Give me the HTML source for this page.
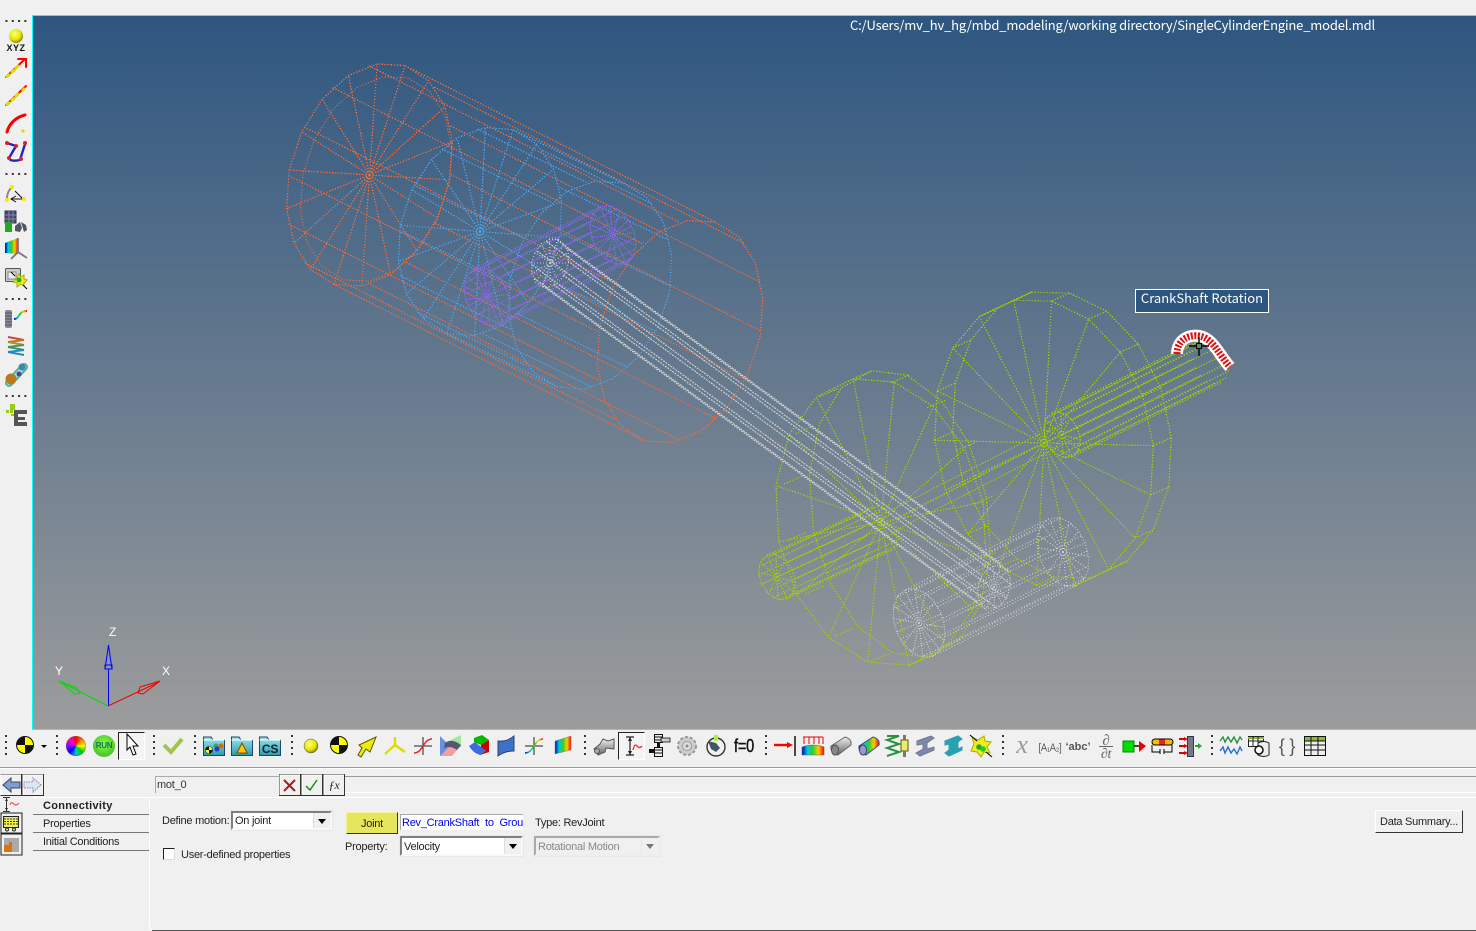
<!DOCTYPE html>
<html><head><meta charset="utf-8"><title>MotionView</title>
<style>
html,body{margin:0;padding:0;width:1476px;height:931px;overflow:hidden;background:#f0f0f0}
body{position:relative;font:11px "Liberation Sans",sans-serif;color:#222;letter-spacing:-.25px}
.a{position:absolute}
#vp{left:32px;top:15px;width:1443px;height:713px;border-left:1px solid #0ff;border-top:1px solid #0ff;border-bottom:1px solid #0ff;background:linear-gradient(#2e5680,#9c9c9c)}
svg{position:absolute;left:0;top:0}
.t{position:absolute;white-space:nowrap;line-height:14px}
.sel{position:absolute;box-sizing:border-box;background:#fff;border:2px solid;border-color:#808080 #f8f8f8 #f8f8f8 #808080;outline:1px solid #e8e8e8;padding:2px 2px;line-height:14px}
.sel i{position:absolute;right:0;top:0;bottom:0;width:16px;background:#f0f0f0;border-left:1px solid #ddd}
.sel i:after{content:"";position:absolute;left:4px;top:6px;border:4px solid transparent;border-top:5px solid #000;border-bottom:0}
.btn{position:absolute;box-sizing:border-box;background:#f0f0f0;border:1px solid;border-color:#fff #333 #333 #fff;text-align:center}
.tab{position:absolute;left:33px;width:116px;height:18px;box-sizing:border-box;border-bottom:1px solid #777;padding-left:10px;line-height:19px}
</style></head><body>
<div class="a" id="vp"></div>
<svg id="wf" width="1476" height="931" viewBox="0 0 1476 931"></svg>

<div class="t" style="left:850px;top:17px;color:#fff;font:13px 'Noto Sans CJK JP','Liberation Sans',sans-serif;line-height:16px;letter-spacing:-.175px">C:/Users/mv_hv_hg/mbd_modeling/working directory/SingleCylinderEngine_model.mdl</div>
<div class="a" style="left:1135px;top:289px;width:132px;height:22px;border:1px solid #fff;background:#2c5680;color:#fff;font:13px 'Noto Sans CJK JP','Liberation Sans',sans-serif;line-height:15px;text-align:center;letter-spacing:0">CrankShaft Rotation</div>
<div class="t" style="left:109px;top:625px;color:#fff;font-size:12px">Z</div>
<div class="t" style="left:55px;top:664px;color:#fff;font-size:12px">Y</div>
<div class="t" style="left:162px;top:664px;color:#fff;font-size:12px">X</div>

<!-- toolbars -->
<div class="a" style="left:0;top:767px;width:1476px;height:1px;background:#999"></div>
<div class="a" style="left:0;top:768px;width:1476px;height:1px;background:#fff"></div>
<div class="a" style="left:118px;top:732px;width:25px;height:26px;background:#f4f4f4;border:1px solid;border-color:#222 #fff #fff #222"></div>
<div class="a" style="left:618px;top:732px;width:25px;height:26px;background:#f4f4f4;border:1px solid;border-color:#222 #fff #fff #222"></div>
<div class="a" style="left:66px;top:736px;width:20px;height:20px;border-radius:50%;background:conic-gradient(#f00,#f80,#ff0,#0c0,#0cc,#00f,#80f,#f0c,#f00);box-shadow:inset 0 0 2px #555"></div>
<div class="a" style="left:93px;top:735px;width:22px;height:22px;border-radius:50%;background:radial-gradient(circle at 50% 40%,#8f4,#3a2);text-align:center;font:bold 8px/22px 'Liberation Sans',sans-serif;color:#175">RUN</div>
<svg width="1476" height="931" viewBox="0 0 1476 931">
<defs>
<radialGradient id="ys" cx=".4" cy=".35" r=".7"><stop offset="0" stop-color="#ffff80"/><stop offset=".6" stop-color="#e6e600"/><stop offset="1" stop-color="#777700"/></radialGradient>
<linearGradient id="rb" x1="0" x2="1"><stop offset="0" stop-color="#00c"/><stop offset=".25" stop-color="#0cc"/><stop offset=".5" stop-color="#3c3"/><stop offset=".75" stop-color="#fc0"/><stop offset="1" stop-color="#f00"/></linearGradient>
<linearGradient id="gr" x1="0" y1="0" x2="0" y2="1"><stop offset="0" stop-color="#eee"/><stop offset="1" stop-color="#666"/></linearGradient>
<linearGradient id="fo" x1="0" y1="0" x2="0" y2="1"><stop offset="0" stop-color="#9fe8ee"/><stop offset="1" stop-color="#2b9aa8"/></linearGradient>
<g id="crash"><circle r="9" fill="#111"/><path d="M0 0V-8A8 8 0 0 1 8 0ZM0 0V8A8 8 0 0 1-8 0Z" fill="#ff0"/></g>
<g id="fold"><path d="M.5 3V0H8L10 3H21.500V18.500H.5Z" fill="url(#fo)" stroke="#246"/><path d="M.5 3H21.500" stroke="#fff"/></g>
<g id="dotsv"><path d="M0 0V22" stroke="#333" stroke-width="2" stroke-dasharray="2 4"/></g>
<g id="dotsh"><path d="M0 0H21" stroke="#333" stroke-width="2" stroke-dasharray="2 4.300"/></g>
</defs>

<!-- motion glyph -->
<path d="M1177 354C1177 338 1192 333 1203 337C1214 341 1220 356 1230 367" fill="none" stroke="#fff" stroke-width="12" stroke-linejoin="round"/>
<path d="M1177 354C1177 338 1192 333 1203 337C1214 341 1220 356 1230 367" fill="none" stroke="#e01010" stroke-width="7" stroke-dasharray="2 1.500"/>
<path d="M1199 337V356M1189 346H1209" stroke="#000" stroke-width="1.400"/><rect x="1196.500" y="343.500" width="5" height="5" fill="#5a8a5a" stroke="#000"/>

<!-- triad -->
<g fill="none" stroke-width="1">
<path d="M108.500 706V645" stroke="#00f"/><path d="M105 669L106.500 659L108.500 645L110.500 659L112 669ZM105 669V665H112V669" stroke="#00f" fill="#8a96a8"/>
<path d="M108 706L61 682" stroke="#0d0"/><path d="M59 681L77 688L80 693L75 694Z" stroke="#0d0"/>
<path d="M108 706L159 682" stroke="#e00"/><path d="M160 681L140 687L138 693L143 694Z" stroke="#e00"/>
</g>

<!-- left toolbar -->
<use href="#dotsh" x="5.500" y="21"/>
<circle cx="16" cy="36" r="7" fill="url(#ys)"/>
<text x="16" y="51" text-anchor="middle" font-family="Liberation Sans" font-weight="bold" font-size="9" letter-spacing=".5" fill="#111">XYZ</text>
<g fill="none" stroke-linecap="round">
<path d="M6 77L25 59" stroke="#f00" stroke-width="2"/><path d="M18 59H26V67" stroke="#f00" stroke-width="2"/>
<path d="M7 76.500L9 75M12 72L14 70.500M16 68L18 66" stroke="#dd0" stroke-width="3"/>
<path d="M6 105L26 86" stroke="#f00" stroke-width="2"/><path d="M7 104.500L9 103M12 100L14 98.500M16 96L18 94M23 90L24 89" stroke="#dd0" stroke-width="3"/>
<path d="M7 132C9 124 16 117 25 115" stroke="#f00" stroke-width="3"/>
<path d="M7 143L16 146L9 158Q10 162 20 160L25 144" stroke="#22c" stroke-width="2.400"/>
</g>
<circle cx="23" cy="131" r="1.600" fill="#dd0"/>
<g fill="#d22"><circle cx="7" cy="143" r="2"/><circle cx="16" cy="146" r="2"/><circle cx="25" cy="143" r="2"/><circle cx="9" cy="158" r="2"/><circle cx="21" cy="159" r="2"/></g>
<use href="#dotsh" x="5.500" y="174"/>
<path d="M7 199C7 193 9 190 12 187" fill="none" stroke="#889" stroke-width="2"/><path d="M11 199H24M16 196L11 199L16 202M15 191L23 199" fill="none" stroke="#111"/>
<circle cx="12" cy="187" r="2" fill="#ee0"/><circle cx="7" cy="200" r="2" fill="#ee0"/><circle cx="24" cy="199" r="2" fill="#ee0"/>
<rect x="5" y="211" width="11" height="12" fill="#447" stroke="#335"/><path d="M9 211V223M13 211V223M5 215H16M5 219H16" stroke="#889"/>
<rect x="5" y="222" width="7" height="10" fill="#2a2"/><path d="M15 226L20 222L22 228L20 232L15 231ZM21 222L26 225L27 230L24 232Z" fill="#556"/>
<path d="M5 243L18 238V254L5 253Z" fill="url(#rb)"/><path d="M18 238V252L11 259M18 252L27 258" fill="none" stroke="#778" stroke-width="1.800"/>
<rect x="5.500" y="268.500" width="15" height="13" rx="1" fill="#ccc" stroke="#555"/><rect x="8" y="272" width="8" height="7" fill="#eee" stroke="#888"/>
<path d="M19 274L21 277L24 275L24 279L27 280L24 283L24 286L21 284L17 287L17 283L13 282L16 279Z" fill="#ee2" stroke="#aa0"/><circle cx="19" cy="280" r="2.500" fill="#2a2"/><path d="M11 272L15 276M23 285L27 289" stroke="#000"/>
<use href="#dotsh" x="5.500" y="299"/>
<rect x="5" y="310" width="7" height="18" rx="2" fill="#889"/><path d="M5 313H12M5 316H12M5 319H12M5 322H12M5 325H12" stroke="#555"/>
<path d="M14 319C20 319 18 311 27 311" fill="none" stroke="url(#rb)" stroke-width="2"/>
<g fill="none" stroke-width="2"><path d="M8 337L24 340" stroke="#c44"/><path d="M24 340L8 342" stroke="#c70"/><path d="M8 342L24 345" stroke="#993"/><path d="M24 345L8 347" stroke="#686"/><path d="M8 347L24 350" stroke="#396"/><path d="M24 350L8 352" stroke="#28c"/><path d="M8 352L24 355" stroke="#28c"/></g>
<path d="M9 383L24 367" fill="none" stroke="#4cb79a" stroke-width="8" stroke-linecap="round"/><path d="M9 383L24 367" fill="none" stroke="#cfe" stroke-width="4" stroke-linecap="round" opacity=".6"/>
<circle cx="11" cy="379" r="5.500" fill="#b77a20"/><circle cx="22" cy="367" r="3.500" fill="#4a80b0"/><circle cx="19" cy="374" r="2.400" fill="#639"/>
<use href="#dotsh" x="5.500" y="396"/>
<path d="M10 404H15V410H13V413H10ZM6 410H9V413H6ZM11 414H14V416H11Z" fill="#9c1"/>
<path d="M14 410H27V414H18V417H25V420H18V422H27V426H14Z" fill="#555"/>

<!-- main toolbar -->
<use href="#dotsv" x="6" y="735"/><use href="#crash" x="25" y="745"/><path d="M41 745H47L44 748Z" fill="#000"/>
<use href="#dotsv" x="57" y="735"/>
<path d="M127 734V750L130 747L133 755L136 754L133 746H138Z" fill="#fff" stroke="#000"/>
<use href="#dotsv" x="154" y="735"/>
<path d="M164 745L171 752L182 739" fill="none" stroke="#a4c24c" stroke-width="4"/>
<use href="#dotsv" x="195" y="735"/>
<use href="#fold" x="203" y="737"/><use href="#crash" transform="translate(209 750) scale(.42)"/><circle cx="216" cy="746" r="2.500" fill="#2a7"/><circle cx="221" cy="746" r="2.500" fill="#d60"/><circle cx="217" cy="749" r="2.500" fill="#33c"/>
<use href="#fold" x="231" y="737"/><path d="M237 753L242 743L247 753Z" fill="#fc0" stroke="#840"/>
<use href="#fold" x="259" y="737"/><text x="270" y="753" text-anchor="middle" font-family="Liberation Sans" font-weight="bold" font-size="12" fill="#123">CS</text>
<use href="#dotsv" x="292" y="735"/>
<circle cx="311" cy="746" r="7" fill="url(#ys)" stroke="#555" stroke-width=".5"/><use href="#crash" x="339" y="745"/>
<path d="M358 755L362 748L359 745L376 737L370 752L366 749L361 757Z" fill="#ee0" stroke="#550"/>
<path d="M395 745V737M395 745L385 754M395 745L405 752" fill="none" stroke="#dd0" stroke-width="2.400"/>
<path d="M423 737V755M414 746H432" stroke="#222"/><path d="M414 753C423 753 423 739 432 739" fill="none" stroke="#e22" stroke-width="1.400"/>
<path d="M440 745L461 735V747L440 756Z" fill="#a0e8a0"/><path d="M440 745H461L452 756H440Z" fill="#f0a0a0"/><path d="M440 736V756L450 746Z" fill="#6a8fe0"/><path d="M445 743Q452 738 461 745L457 750Q450 745 444 748Z" fill="#557"/>
<path d="M474 738L482 735L489 740L481 745L474 742Z" fill="#0b0"/><path d="M481 745L489 740L489 752L480 755Z" fill="#c00"/><path d="M469 746L475 742L486 751L480 755Q473 753 469 746Z" fill="#3d6be0"/>
<path d="M498 741Q507 742 514 736V751Q505 751 498 756Z" fill="#3d72c8" stroke="#247"/>
<path d="M534 737V755M525 746H543" stroke="#222"/><path d="M525 753C534 753 534 739 543 739" fill="none" stroke="url(#rb)" stroke-width="1.500"/>
<path d="M555 741L571 736V750L555 754Z" fill="url(#rb)" stroke="#888" stroke-width=".5"/>
<use href="#dotsv" x="585" y="735"/>
<path d="M594 749L600 744L603 739L608 741L614 739V749L606 748L605 752L598 755Z" fill="url(#gr)" stroke="#555"/><circle cx="597" cy="751" r="2.500" fill="#aaa" stroke="#555"/>
<path d="M626 737H634M630 737V755M626 755H634" stroke="#222" stroke-width="1.200"/><path d="M630 737L628 741H632ZM630 755L628 751H632Z" fill="#222"/><path d="M633 750C636 738 637 752 642 746" fill="none" stroke="#f33" stroke-width="1.400"/>
<rect x="649" y="749" width="10" height="4" fill="#111"/><rect x="654.500" y="734.500" width="8" height="8" fill="#eee" stroke="#111"/><path d="M655 737H662M655 740H662" stroke="#111"/><rect x="654.500" y="747.500" width="8" height="9" fill="#eee" stroke="#111"/><path d="M655 750H662M655 753H662" stroke="#111"/><rect x="661" y="738" width="9" height="4" fill="#ccc" stroke="#111" stroke-width=".8"/><rect x="657" y="742" width="3" height="6" fill="#111"/>
<circle cx="687" cy="746" r="9" fill="#ccc" stroke="#999" stroke-width="2" stroke-dasharray="3 2"/><circle cx="687" cy="746" r="4.500" fill="#ddd" stroke="#999"/><circle cx="687" cy="746" r="1.500" fill="#888"/>
<circle cx="716" cy="747" r="9" fill="#f0f0f0" stroke="#333" stroke-width="1.400"/><path d="M708 741L716 743L720 748L716 752L711 749Z" fill="#456"/><rect x="714" y="735" width="4" height="6" fill="#ae4"/>
<text x="744" y="752" text-anchor="middle" font-family="Liberation Sans" font-size="18" fill="#111" textLength="20" lengthAdjust="spacingAndGlyphs" stroke="#111" stroke-width=".4">f=0</text>
<use href="#dotsv" x="766" y="735"/>
<path d="M774 745H790" stroke="#f00" stroke-width="2.400"/><path d="M787 742L793 745L787 748Z" fill="#f00"/><path d="M795 736V756" stroke="#111" stroke-width="1.500"/>
<path d="M802 747Q813 743 824 747V755H802Z" fill="url(#rb)" stroke="#666" stroke-width=".6"/><path d="M803 737H823M804 737V744M809 737V744M814 737V744M819 737V744M823 737V744" stroke="#e00"/>
<path d="M831 746L845 737Q852 739 851 745L838 755Q830 753 831 746Z" fill="url(#gr)" stroke="#666"/><ellipse cx="835" cy="750" rx="3.500" ry="5" fill="#888" stroke="#555"/>
<path d="M859 746L873 737Q880 739 879 745L866 755Q858 753 859 746Z" fill="url(#rb)" stroke="#448"/><ellipse cx="863" cy="750" rx="3.500" ry="5" fill="#99c" stroke="#448"/>
<path d="M887 736H899L887 740L899 744L887 748L899 752L887 756" fill="none" stroke="#2a9040" stroke-width="2"/>
<rect x="901" y="740" width="7" height="11" fill="#ee6" stroke="#552"/><path d="M904.500 735V740M904.500 751V757" stroke="#777" stroke-width="3"/>
<path d="M917 741L931 736L934 738L927 743V749L934 747V750L920 756L916 753L923 749V744L917 745Z" fill="#778ab0" stroke="#778"/>
<path d="M945 741L958 736L962 739L958 742V749L962 747V750L949 756L945 753L949 750V744L945 745Z" fill="#2aa0b0" stroke="#2aa0b0"/>
<path d="M974 744L972 737L978 740L984 736L985 741L991 742L987 747L990 753L984 752L981 757L977 752L971 751Z" fill="#ee2" stroke="#aa0"/><circle cx="979" cy="747" r="2.800" fill="#2a2"/><circle cx="983" cy="749" r="2.800" fill="#2c2"/><path d="M970 735L977 741M986 752L992 757" stroke="#000"/>
<use href="#dotsv" x="1003" y="735"/>
<text x="1022" y="753" text-anchor="middle" font-family="Liberation Serif" font-style="italic" font-size="26" fill="#999">x</text>
<text x="1050" y="751" text-anchor="middle" font-family="Liberation Sans" font-size="11" fill="#555" textLength="23" lengthAdjust="spacingAndGlyphs">[A₁A₂]</text>
<text x="1078" y="750" text-anchor="middle" font-family="Liberation Sans" font-weight="bold" font-size="11" fill="#555" letter-spacing="0">‘abc’</text>
<text x="1106" y="745" text-anchor="middle" font-family="Liberation Serif" font-style="italic" font-size="15" fill="#666">∂</text><path d="M1099 746.500H1113" stroke="#666"/><text x="1106" y="758" text-anchor="middle" font-family="Liberation Serif" font-style="italic" font-size="14" fill="#666">∂t</text>
<rect x="1123" y="741" width="11" height="11" fill="#0d0" stroke="#080"/><path d="M1134 746H1139" stroke="#000" stroke-width="1.400"/><path d="M1139 741L1146 746L1139 752Z" fill="#e00"/>
<rect x="1152" y="739" width="21" height="6" rx="3" fill="#fb0" stroke="#000"/><rect x="1159" y="739.500" width="6" height="5" fill="#e22"/><path d="M1152 745V752H1160M1172 745V752H1164M1160 749V754M1164 749V754" fill="none" stroke="#000"/>
<path d="M1179 739H1186M1179 746H1186M1179 753H1186" stroke="#d00" stroke-width="2"/><path d="M1184 737L1188 739L1184 741ZM1184 744L1188 746L1184 748ZM1184 751L1188 753L1184 755Z" fill="#d00"/>
<rect x="1187.500" y="736.500" width="6" height="20" fill="#778" stroke="#335"/><path d="M1195 746H1199" stroke="#2a2" stroke-width="2"/><path d="M1198 743L1202 746L1198 749Z" fill="#2a2"/>
<use href="#dotsv" x="1212" y="735"/>
<path d="M1220 741L1223 737L1225 742L1228 737L1231 742L1234 737L1237 743L1240 737L1242 740" fill="none" stroke="#2a9040" stroke-width="1.400"/>
<path d="M1220 751L1223 747L1225 753L1228 747L1231 753L1234 749L1237 754L1240 747L1242 751" fill="none" stroke="#2a70d0" stroke-width="1.400"/>
<rect x="1248.500" y="736.500" width="15" height="10" fill="#fff" stroke="#222"/><path d="M1248 737H1264V739H1248Z" fill="#8b3"/><path d="M1253 737V746M1258 737V746M1249 741H1263" stroke="#222"/>
<path d="M1258 743Q1264 740 1269 743V755Q1264 758 1258 755Z" fill="#eee" stroke="#222"/><circle cx="1259" cy="750" r="4" fill="#fff" stroke="#111" stroke-width="1.500"/>
<text x="1287" y="752" text-anchor="middle" font-family="Liberation Sans" font-size="18" fill="#555">{ }</text>
<rect x="1304.500" y="736.500" width="21" height="19" fill="#eee" stroke="#111"/><rect x="1305" y="737" width="20" height="4" fill="#8b3"/><path d="M1305 741H1325M1305 745H1325M1305 750H1325M1311 737V755M1318 737V755" stroke="#111"/>

<!-- second row -->
<g fill="#f0f0f0" stroke="#333"><path d="M1 774.500H21.500V795.500H1Z"/><path d="M22.500 774.500H43.500V795.500H22.500Z"/><path d="M279.500 774.500H300.500V795.500H279.500Z"/><path d="M301.500 774.500H322.500V795.500H301.500Z"/><path d="M323.500 774.500H344.500V795.500H323.500Z"/></g>
<path d="M1 795V775H21M23 795V775H43M280 795V775H300M302 795V775H322M324 795V775H344" fill="none" stroke="#fff"/>
<path d="M3 785L11 778V782H20V788H11V792Z" fill="#7d9fd0" stroke="#446"/>
<path d="M41 785L33 778V782H24V788H33V792Z" fill="#dde6f4" stroke="#88a" stroke-dasharray="1.500 1"/>
<path d="M284 780L295 791M295 780L284 791" stroke="#a02020" stroke-width="2"/>
<path d="M306 786L310 790L317 780" fill="none" stroke="#1a8a1a" stroke-width="1.500"/>
<text x="334" y="789" text-anchor="middle" font-family="Liberation Serif" font-style="italic" font-size="12" fill="#222">ƒx</text>
<path d="M155.500 793V776.500H279" fill="none" stroke="#aaa"/>
<path d="M345 776.500H1476" stroke="#999"/><path d="M345 792.500H1476" stroke="#fff"/>

<!-- side icons -->
<path d="M3 797.500H10M6.500 798V811M3 811.500H10" stroke="#333"/><path d="M6.500 798L5 801H8ZM6.500 811L5 808H8Z" fill="#333"/><path d="M10 805C12 798 14 809 19 803" fill="none" stroke="#f55" stroke-width="1.200"/>
<rect x="1" y="813" width="21" height="20" fill="#f0f0f0" stroke="#222"/><rect x="3.500" y="816.500" width="15" height="11" fill="#ee5" stroke="#222"/><path d="M4 819H18M4 821.500H18M4 824H18" stroke="#333" stroke-dasharray="2 1"/><circle cx="7" cy="829.500" r="1.500" fill="none" stroke="#222"/><circle cx="14" cy="829.500" r="1.500" fill="none" stroke="#222"/>
<rect x="1" y="834" width="21" height="21" fill="#f0f0f0" stroke="#222"/><rect x="4" y="838" width="15" height="14" fill="#aaa"/><path d="M4 845H9V842H12V852H4Z" fill="#e07010"/>

<!-- panel lines -->
<path d="M33 797.500H1476" stroke="#fff"/>
<path d="M149.500 797V927L152 930" fill="none" stroke="#fff"/>
<path d="M152 930.500H1476" stroke="#555"/>
</svg>

<div class="tab" style="top:797px;font-weight:bold;letter-spacing:.3px">Connectivity</div>
<div class="tab" style="top:815px">Properties</div>
<div class="tab" style="top:833px">Initial Conditions</div>
<div class="a" style="left:157px;top:778px;line-height:14px;font-size:11px;color:#333">mot_0</div>

<div class="t" style="left:162px;top:814px">Define motion:</div>
<div class="sel" style="left:231px;top:811px;width:101px;height:19px;padding-top:1px">On joint<i></i></div>
<div class="a" style="left:163px;top:848px;width:10px;height:10px;background:#fff;border:1px solid;border-color:#222 #ddd #ddd #222"></div>
<div class="t" style="left:181px;top:848px">User-defined properties</div>
<div class="btn" style="left:346px;top:812px;width:52px;height:22px;background:#e6e65c;line-height:22px;border-color:#f4f4a0 #333 #333 #f4f4a0">Joint</div>
<div class="a" style="left:400px;top:814px;width:123px;height:16px;box-sizing:border-box;background:#fff;border-top:1px solid #aaa;border-left:1px solid #aaa;overflow:hidden;color:#00e;white-space:nowrap;line-height:16px;padding-left:1px;word-spacing:3px">Rev_CrankShaft to Ground</div>
<div class="t" style="left:535px;top:816px">Type: RevJoint</div>
<div class="t" style="left:345px;top:840px">Property:</div>
<div class="sel" style="left:400px;top:836px;width:123px;height:20px">Velocity<i></i></div>
<div class="sel" style="left:534px;top:836px;width:126px;height:20px;background:#f0f0f0;color:#888;border-color:#aaa #eee #eee #aaa">Rotational Motion<i style="opacity:.5"></i></div>
<div class="btn" style="left:1375px;top:810px;width:88px;height:23px;line-height:22px">Data Summary...</div>

<script>
(function(){
var s='';
function ring(c,a,b,ang,n){var r=[],u=ang*Math.PI/180,ux=Math.cos(u),uy=Math.sin(u),i,t;
 for(i=0;i<n;i++){t=i*2*Math.PI/n;r.push([c[0]+a*Math.cos(t)*ux-b*Math.sin(t)*uy,c[1]+a*Math.cos(t)*uy+b*Math.sin(t)*ux]);}return r;}
function p(d,col,dash,op,w){s+='<path d="'+d+'" fill="none" stroke="'+col+'" stroke-width="'+(w||1.2)+'" stroke-dasharray="'+(dash||'1.4 1.6')+'" opacity="'+(op||1)+'" shape-rendering="crispEdges"/>';}
function pts(r){return r.map(function(q){return q[0].toFixed(1)+' '+q[1].toFixed(1)}).join('L');}
function cap(c,a,b,ang,n,col,dash,op){var r=ring(c,a,b,ang,n),d='M'+pts(r)+'Z';
 r.forEach(function(q){d+='M'+c[0]+' '+c[1]+'L'+q[0].toFixed(1)+' '+q[1].toFixed(1);});p(d,col,dash,op);}
function outline(c,a,b,ang,n,col,dash,op){p('M'+pts(ring(c,a,b,ang,n))+'Z',col,dash,op);}
function lines(c1,c2,a,b,ang,n,col,dash,op){var r1=ring(c1,a,b,ang,n),r2=ring(c2,a,b,ang,n),d='';
 r1.forEach(function(q,i){d+='M'+q[0].toFixed(1)+' '+q[1].toFixed(1)+'L'+r2[i][0].toFixed(1)+' '+r2[i][1].toFixed(1);});p(d,col,dash,op);}
var G='#9fd000',O='#ff6a33',B='#4fa4ee',V='#9268f2',W='#c8cacc';
// green crank discs
cap([881,522],146,104,79,16,G);
outline([900,514],146,88,79,16,G);
lines([881,522],[900,514],146,95,79,16,G);
cap([1044,443],146,108,78,18,G);
outline([1062,435],146,108,78,18,G);
lines([1044,443],[1062,435],146,108,78,18,G);
// pin and shafts
lines([890,522],[1044,443],10,6,65,4,G);
cap([777,577],24,17,65,12,G);
cap([1062,435],24,17,65,12,G);
lines([777,577],[883,528],24,17,65,16,G);
lines([1062,435],[1212,360],24,17,65,16,G);
// orange cylinder
cap([369.500,175],115,79,-72,18,O);
outline([376,179],106,72,-72,18,O,null,.7);
lines([369.500,175],[680,331.500],115,79,-72,14,O);
outline([680,331.500],115,79,-72,18,O);
// blue
cap([480,231.500],107,79,-72,18,B);
lines([480,231.500],[590,285],107,79,-72,14,B);
outline([590,285],107,79,-72,18,B);
// violet
cap([487,297],31,21,65,14,V,'1 1');
cap([613,235],31,21,65,14,V,'1 1');
lines([487,297],[613,235],31,21,65,16,V,'1 1');
// white piston
cap([919,623],36,24,68,16,W,'1 1.500');
cap([1063,552],36,24,68,16,W,'1 2');
lines([919,623],[1063,552],36,24,68,14,W,'1 2');
// white rod
cap([550,263],25,18,-72,14,W,'1 2');
cap([994,587],22,16,-72,14,W,'1 1.500');
lines([550,263],[994,587],24,17,-72,10,W,'2 1');
document.getElementById('wf').innerHTML=s;
})();
</script>
</body></html>
